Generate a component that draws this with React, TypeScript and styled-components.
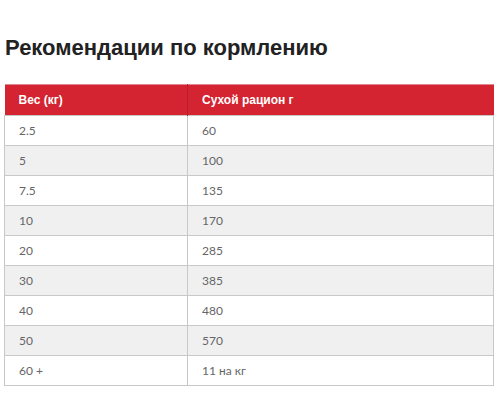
import * as React from 'react'
import styled, { createGlobalStyle } from 'styled-components'

const GlobalStyle = createGlobalStyle`
  body {
    margin: 0;
    background: #fff;
  }
`

const Page = styled.div`
  padding: 36px 6px 0 4px;
`

const Title = styled.h2`
  margin: 0 0 24px 1px;
  font-family: 'Liberation Sans', Arial, sans-serif;
  font-size: 22px;
  font-weight: bold;
  color: #222;
  line-height: 24px;
`

const Table = styled.table`
  width: 100%;
  border-collapse: collapse;
  font-family: Lato, 'DejaVu Sans', sans-serif;
  font-size: 12px;
`

const HeadCell = styled.th`
  background: #d42331;
  color: #fff;
  text-align: left;
  font-family: 'Liberation Sans', Arial, sans-serif;
  font-weight: bold;
  height: 30px;
  padding: 0 0 0 14px;
  border-right: 1px solid #b81d2a;
  border-top: 1px solid #e08890;
  &:last-child {
    border-right: none;
  }
`

const Row = styled.tr<{ $alt: boolean }>`
  background: ${p => (p.$alt ? '#f0f0f1' : '#fff')};
`

const Cell = styled.td`
  color: #666;
  height: 29px;
  padding: 0 0 0 14px;
  border: 1px solid #c8c8c8;
  &:first-child {
    width: 168px;
  }
`

const rows: [string, string][] = [
  ['2.5', '60'],
  ['5', '100'],
  ['7.5', '135'],
  ['10', '170'],
  ['20', '285'],
  ['30', '385'],
  ['40', '480'],
  ['50', '570'],
  ['60 +', '11 на кг'],
]

export default function App() {
  return (
    <Page>
      <GlobalStyle />
      <Title>Рекомендации по кормлению</Title>
      <Table>
        <thead>
          <tr>
            <HeadCell>Вес (кг)</HeadCell>
            <HeadCell>Сухой рацион г</HeadCell>
          </tr>
        </thead>
        <tbody>
          {rows.map((r, i) => (
            <Row key={i} $alt={i % 2 === 1}>
              <Cell>{r[0]}</Cell>
              <Cell>{r[1]}</Cell>
            </Row>
          ))}
        </tbody>
      </Table>
    </Page>
  )
}
